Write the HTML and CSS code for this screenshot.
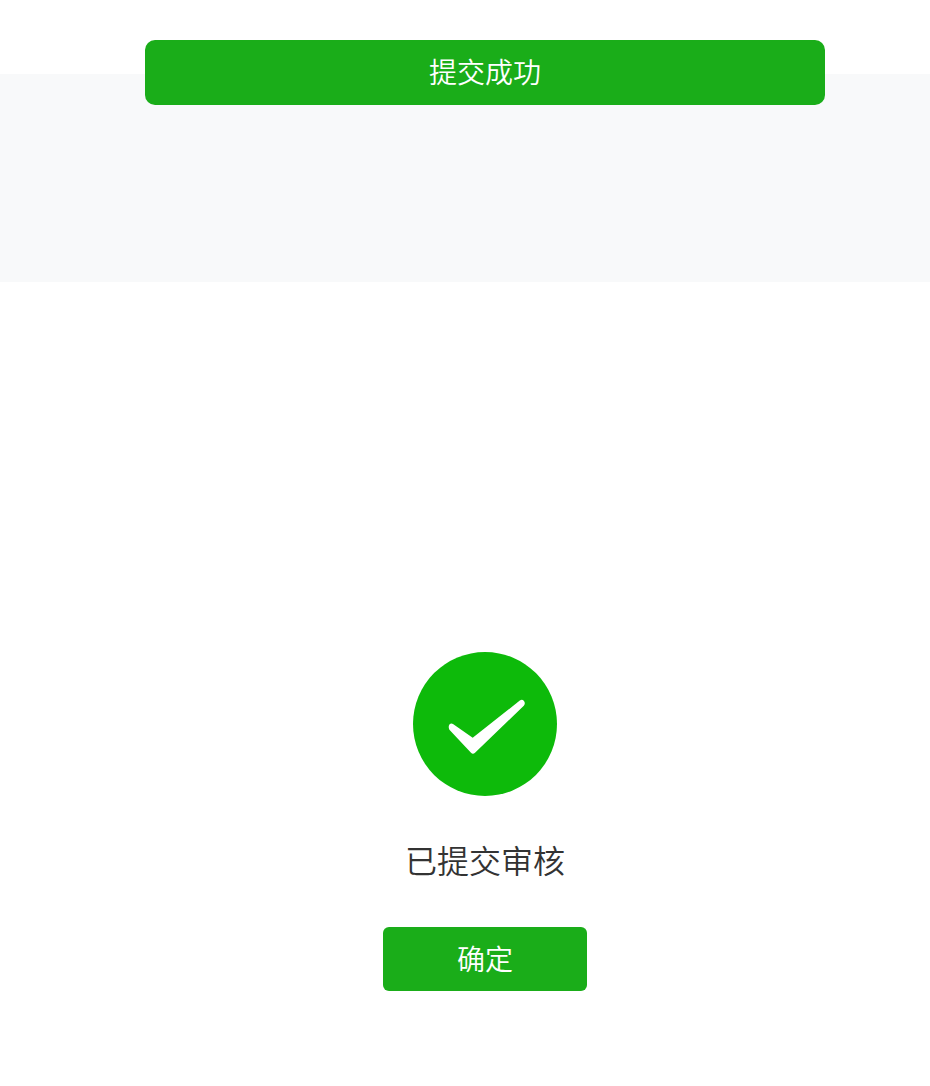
FILE: index.html
```html
<!DOCTYPE html>
<html lang="zh">
<head>
<meta charset="utf-8">
<title>已提交审核</title>
<link rel="stylesheet" href="styles.css">
</head>
<body>
<div class="toast">提交成功</div>
<main class="page">
  <div class="band"></div>
  <section class="result">
    <svg class="icon" viewBox="0 0 144 144" width="144" height="144">
      <circle cx="72" cy="72" r="72" fill="#0dba0a"/>
      <path d="M36.4 77.8 L58 100.8 Q60 102.7 62 100.7 L110.8 53.8 Q112.8 51 110.8 48.8 Q109 47 106.8 48.6 L59.7 85.8 L40 72 Q38 70.8 36.4 72.6 Q35 75 36.4 77.8 Z" fill="#fff"/>
    </svg>
    <h1 class="title">已提交审核</h1>
    <button class="confirm">确定</button>
  </section>
</main>
</body>
</html>
```
FILE: styles.css
```css
html, body { margin: 0; padding: 0; background: #fff; }
body { width: 930px; height: 1086px; overflow: hidden; font-family: "Noto Sans CJK SC", "Liberation Sans", sans-serif; font-weight: 350; }
.page { display: flex; flex-direction: column; padding-top: 74px; }
.band { height: 208px; background: #f8f9fa; }
.toast { position: absolute; left: 145px; top: 40px; width: 680px; height: 65px; border-radius: 10px; background: #1aad19; color: #fff; font-size: 28px; line-height: 63px; text-align: center; }
.result { display: flex; flex-direction: column; align-items: center; padding-top: 370px; padding-left: 40px; }
.icon { display: block; }
.title { margin: 39px 0 0; font-size: 32px; font-weight: 350; line-height: 48px; color: #333; }
.confirm { margin-top: 44px; width: 204px; height: 64px; border: 0; border-radius: 6px; background: #1aad19; color: #fff; font-family: inherit; font-weight: 350; font-size: 28px; line-height: 62px; padding: 0 0 2px; }
```
